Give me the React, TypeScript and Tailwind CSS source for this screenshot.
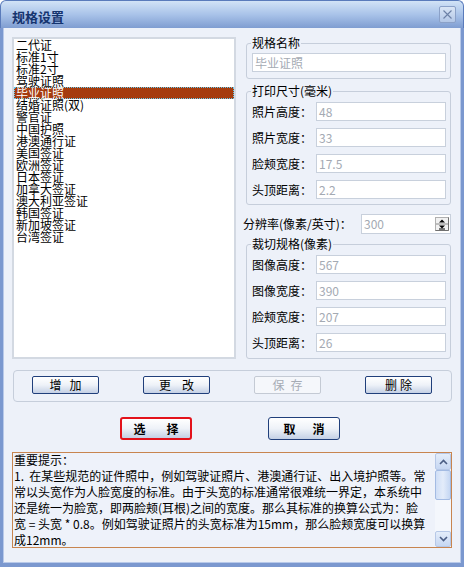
import React from "react";

const items = [
  "二代证",
  "标准1寸",
  "标准2寸",
  "驾驶证照",
  "毕业证照",
  "结婚证照(双)",
  "警官证",
  "中国护照",
  "港澳通行证",
  "美国签证",
  "欧洲签证",
  "日本签证",
  "加拿大签证",
  "澳大利亚签证",
  "韩国签证",
  "新加坡签证",
  "台湾签证",
];

const noteLines = [
  "重要提示：",
  "1.  在某些规范的证件照中，例如驾驶证照片、港澳通行证、出入境护照等。常",
  "常以头宽作为人脸宽度的标准。由于头宽的标准通常很难统一界定，本系统中",
  "还是统一为脸宽，即两脸颊(耳根)之间的宽度。那么其标准的换算公式为：脸",
  "宽 = 头宽 * 0.8。例如驾驶证照片的头宽标准为15mm，那么脸颊宽度可以换算",
  "成12mm。",
];

function Field({ label, value }: { label: string; value: string }) {
  return (
    <div className="flex items-center h-[19px]">
      <span className="w-[64px] shrink-0 leading-[12px]">{label}</span>
      <div className="w-[130px] h-[19px] border border-[#c8d0dc] bg-white text-[#a4aab3] pl-[2px] leading-[17px]">
        {value}
      </div>
    </div>
  );
}

function SmallButton({ a, b, gap, disabled }: { a: string; b: string; gap: string; disabled?: boolean }) {
  return (
    <div
      className={
        disabled
          ? "w-[67px] h-[18px] rounded-[2px] border border-[#c4cad4] bg-[#f5f7fb] text-[#a6acb5] flex items-center justify-center leading-none"
          : "w-[67px] h-[18px] rounded-[2px] border border-[#203f7b] bg-gradient-to-b from-white via-[#eef2f8] to-[#c4d0e5] flex items-center justify-center leading-none"
      }
    >
      <span className={gap}>{a}</span>
      <span>{b}</span>
    </div>
  );
}

function Chevron({ up }: { up?: boolean }) {
  return (
    <svg width="9" height="6" viewBox="0 0 9 6">
      <path
        d={up ? "M1 5L4.5 1.5L8 5" : "M1 1L4.5 4.5L8 1"}
        fill="none"
        stroke="#4b5e84"
        strokeWidth="1.6"
      />
    </svg>
  );
}

export default function App() {
  return (
    <div className="w-[464px] h-[567px] flex flex-col overflow-hidden font-['Noto_Sans_CJK_SC',sans-serif] text-[12px] text-black">
      {/* Title bar */}
      <div className="h-[28px] shrink-0 rounded-t-[6px] border border-b-0 border-[#5a7bbb] bg-gradient-to-b from-[#d2e3f6] via-[#a9c3e9] to-[#7f9dd1] flex items-center pl-[11px] pr-[7px]">
        <span className="font-bold text-[13px] text-[#15346f] leading-none mt-[3px]">规格设置</span>
        <div className="ml-auto w-[17px] h-[17px] rounded-[2px] border border-[#8ba1c8] bg-gradient-to-b from-[#d9e5f5] to-[#b3c7e7] flex items-center justify-center">
          <svg width="9" height="9" viewBox="0 0 9 9">
            <path d="M0.5 0.5L8.5 8.5M8.5 0.5L0.5 8.5" stroke="#6c81a6" strokeWidth="1.1" />
          </svg>
        </div>
      </div>

      {/* Body */}
      <div className="flex-1 flex flex-col bg-[#edf1f9] border-l-[3px] border-r-[3px] border-b-[4px] border-[#7b98cf] shadow-[inset_1px_0_0_#b8c9e9,inset_-1px_0_0_#b8c9e9,inset_0_-1px_0_#b8c9e9]">
        {/* Top row */}
        <div className="mt-[9px] ml-[9px] flex gap-[7px]">
          {/* List */}
          <div className="w-[224px] h-[322px] bg-white border-2 border-[#d3d9e2]">
            {items.map((it) =>
              it === "毕业证照" ? (
                <div
                  key={it}
                  className="h-[12px] leading-[10px] pl-[1px] bg-[#a53b0e] text-white border border-dotted border-[#62caf2] whitespace-nowrap"
                >
                  {it}
                </div>
              ) : (
                <div key={it} className="h-[12px] leading-[12px] pl-[2px] whitespace-nowrap">
                  {it}
                </div>
              )
            )}
          </div>

          {/* Right column */}
          <div className="w-[213px] flex flex-col">
            <fieldset className="ml-[3px] w-[205px] rounded-[3px] border border-[#c6cedb] pl-[5px] pr-[4px] pt-[4px] pb-[6px]">
              <legend className="-ml-[1px] px-[1px] leading-[12px]">规格名称</legend>
              <div className="w-[194px] h-[19px] border border-[#c8d0dc] bg-white text-[#a4aab3] pl-[2px] leading-[17px]">
                毕业证照
              </div>
            </fieldset>

            <fieldset className="mt-[6px] ml-[3px] w-[205px] rounded-[3px] border border-[#c6cedb] pl-[5px] pr-[4px] pt-[5px] pb-[5px]">
              <legend className="-ml-[1px] px-[1px] leading-[12px]">打印尺寸(毫米)</legend>
              <div className="flex flex-col gap-[7px]">
                <Field label="照片高度：" value="48" />
                <Field label="照片宽度：" value="33" />
                <Field label="脸颊宽度：" value="17.5" />
                <Field label="头顶距离：" value="2.2" />
              </div>
            </fieldset>

            <div className="mt-[9px] h-[20px] flex items-center">
              <span className="w-[118px] shrink-0 leading-[12px] whitespace-nowrap">分辨率(像素/英寸)：</span>
              <div className="w-[90px] h-[20px] border border-[#c8d0dc] bg-white flex items-center justify-between pl-[2px] pr-[1px]">
                <span className="text-[#a4aab3] leading-[12px]">300</span>
                <svg width="14" height="14" viewBox="0 0 14 14">
                  <rect x="0.5" y="0.5" width="13" height="13" fill="#f2f2f2" stroke="#b0b0b0" />
                  <path d="M13.5 0.5V13.5H0.5" fill="none" stroke="#707070" />
                  <line x1="1" y1="7" x2="13" y2="7" stroke="#8a8a8a" />
                  <path d="M7 2.5L10 5.5H4Z" fill="#000" />
                  <path d="M4 8.5H10L7 11.5Z" fill="#000" />
                  <line x1="4" y1="12" x2="10" y2="12" stroke="#000" />
                </svg>
              </div>
            </div>

            <fieldset className="mt-[4px] ml-[3px] w-[205px] rounded-[3px] border border-[#c6cedb] pl-[5px] pr-[4px] pt-[5px] pb-[6px]">
              <legend className="-ml-[1px] px-[1px] leading-[12px]">裁切规格(像素)</legend>
              <div className="flex flex-col gap-[7px]">
                <Field label="图像高度：" value="567" />
                <Field label="图像宽度：" value="390" />
                <Field label="脸颊宽度：" value="207" />
                <Field label="头顶距离：" value="26" />
              </div>
            </fieldset>
          </div>
        </div>

        {/* Button group */}
        <div className="mt-[11px] ml-[10px] w-[439px] h-[32px] rounded-[4px] border border-[#c6cedb] flex items-start pt-[5px] pl-[18px] gap-[44px]">
          <SmallButton a="增" b="加" gap="mr-[8px]" />
          <SmallButton a="更" b="改" gap="mr-[11px]" />
          <SmallButton a="保" b="存" gap="mr-[6px]" disabled />
          <SmallButton a="删" b="除" gap="mr-[3px]" />
        </div>

        {/* Main buttons */}
        <div className="mt-[15px] flex">
          <div className="ml-[117px] w-[72px] h-[23px] rounded-[3px] border-2 border-[#e3121b] bg-gradient-to-b from-white via-[#eef2f8] to-[#c4d0e5] flex items-center justify-center font-bold leading-none">
            <span className="mr-[21px]">选</span>
            <span>择</span>
          </div>
          <div className="ml-[76px] w-[72px] h-[23px] rounded-[3px] border border-[#203f7b] bg-gradient-to-b from-white via-[#eef2f8] to-[#c4d0e5] flex items-center justify-center font-bold leading-none">
            <span className="mr-[17px]">取</span>
            <span>消</span>
          </div>
        </div>

        {/* Notes */}
        <div className="mt-[12px] ml-[9px] w-[440px] h-[96px] border border-[#c8854f] bg-[#eef2fa] flex">
          <div className="flex-1 -mt-[1px] pl-[1px] leading-[16px] text-[12px] whitespace-pre">
            {noteLines.map((l, i) => (
              <div key={i}>{l}</div>
            ))}
          </div>
          <div className="w-[16px] shrink-0 flex flex-col bg-[#f4f7fc]">
            <div className="h-[17px] rounded-[2px] border border-[#b6c8e7] bg-gradient-to-b from-[#e4edfa] to-[#c6d7f2] flex items-center justify-center">
              <Chevron up />
            </div>
            <div className="h-[30px] rounded-[2px] border border-[#a3bbe3] bg-gradient-to-r from-[#cfdef6] via-[#e3ecfa] to-[#c5d7f3]" />
            <div className="flex-1" />
            <div className="h-[16px] rounded-[2px] border border-[#b6c8e7] bg-gradient-to-b from-[#e4edfa] to-[#c6d7f2] flex items-center justify-center">
              <Chevron />
            </div>
          </div>
        </div>
      </div>
    </div>
  );
}
